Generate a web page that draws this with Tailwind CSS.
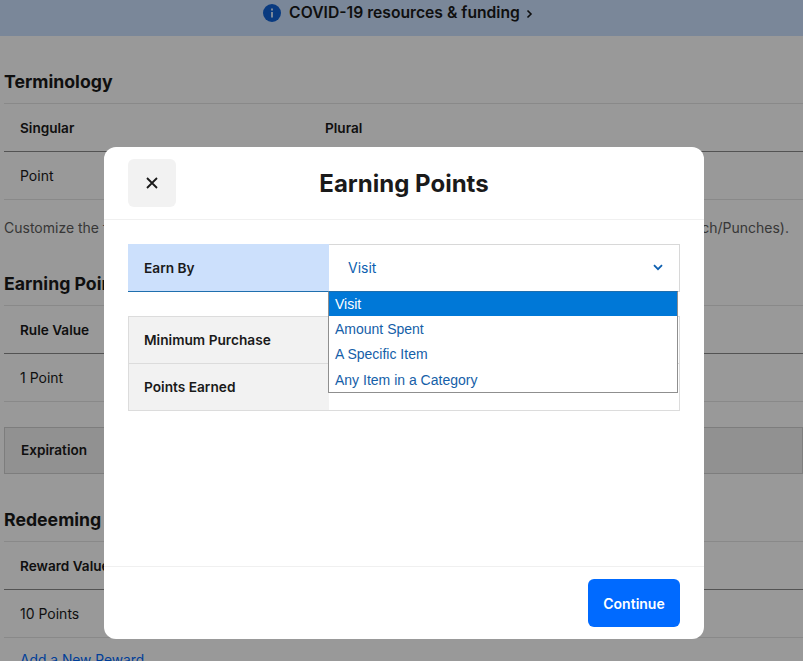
<!doctype html>
<html lang="en">
  <head>
    <meta charset="UTF-8" />
    <meta name="viewport" content="width=device-width, initial-scale=1.0" />
    <title>Earning Points</title>
    <script src="https://cdn.jsdelivr.net/npm/@tailwindcss/browser@4"></script>
  </head>
  <body class="bg-white h-screen overflow-hidden relative font-['Inter',sans-serif] text-[#1a1a1a]">
    <!-- Banner -->
    <div class="h-[36px] bg-[#cce1ff] flex items-center justify-center gap-2 pb-[10px] pr-[7px]">
      <svg class="w-[18px] h-[18px]" viewBox="0 0 18 18">
        <circle cx="9" cy="9" r="9" fill="#0f62d6" />
        <rect x="8" y="8" width="2" height="5.5" fill="#cce1ff" />
        <rect x="8" y="4.5" width="2" height="2" fill="#cce1ff" />
      </svg>
      <span class="text-[15.7px] font-semibold leading-5">COVID-19 resources &amp; funding</span>
      <svg class="w-[7px] h-[10px] -ml-[2px] mt-[2px]" viewBox="0 0 7 10" fill="none" stroke="#1a1a1a" stroke-width="1.6">
        <path d="M1.5 1.5 5 5 1.5 8.5" />
      </svg>
    </div>

    <!-- Page behind the modal -->
    <main class="pl-1">
      <h2 class="text-[17.7px] font-bold leading-6 mt-[34px] mb-[9px]">Terminology</h2>
      <div class="h-12 border-t border-[#e5e5e5] flex items-center text-[13.6px] font-semibold pl-4 pt-[2px]">
        <span class="w-[305px]">Singular</span>
        <span>Plural</span>
      </div>
      <div class="h-12 border-t border-[#8a8a8a] flex items-center text-[14px] pl-4">Point</div>
      <div class="border-t border-[#e5e5e5] pt-[18px] h-[37px]">
        <p class="w-[785px] flex justify-between text-[14px] leading-5 text-[#5c5c5c] whitespace-nowrap">
          <span>Customize the following terms for your program.</span>
          <span>Use a singular and a plural form (Punch/Punches).</span>
        </p>
      </div>

      <h2 class="text-[17.7px] font-bold leading-6 mt-[36px] mb-[9px]">Earning Points</h2>
      <div class="h-12 border-t border-[#e5e5e5] flex items-center text-[13.6px] font-semibold pl-4 pt-[2px]">Rule Value</div>
      <div class="h-12 border-t border-[#8a8a8a] flex items-center text-[14px] pl-4">1 Point</div>
      <div class="border-t border-[#e5e5e5] h-[26px]"></div>
      <div class="h-[47px] border border-[#d0d0d0] bg-[#f2f2f2] flex items-center text-[13.6px] font-semibold pl-4">Expiration</div>

      <h2 class="text-[17.7px] font-bold leading-6 mt-[34px] mb-[9px]">Redeeming Points</h2>
      <div class="h-12 border-t border-[#e5e5e5] flex items-center text-[13.6px] font-semibold pl-4 pt-[2px]">Reward Value</div>
      <div class="h-12 border-t border-[#8a8a8a] flex items-center text-[14px] pl-4">10 Points</div>
      <div class="border-t border-[#e5e5e5] pt-[12px] pl-4 text-[13.8px] leading-5 text-[#006aff]">Add a New Reward</div>
    </main>

    <!-- Modal -->
    <div class="absolute inset-0 bg-black/40 pt-[147px]">
      <div class="ml-[104px] w-[600px] h-[492px] bg-white rounded-xl flex flex-col">
        <header class="h-[73px] shrink-0 border-b border-[#f0f0f0] flex items-center px-6 relative">
          <button class="w-12 h-12 rounded-md bg-[#f2f2f2] flex items-center justify-center">
            <svg class="w-3 h-3" viewBox="0 0 12 12" fill="none" stroke="#1a1a1a" stroke-width="1.8">
              <path d="M1 1l10 10M11 1 1 11" />
            </svg>
          </button>
          <h1 class="flex-1 text-center text-[24px] font-bold leading-8 pr-[48px] pt-[2px]">Earning Points</h1>
        </header>

        <div class="flex-1 px-6 pt-6 relative">
          <!-- Earn By select -->
          <div class="flex h-12 w-[552px]">
            <div class="w-[201px] bg-[#cce0fc] border-b border-[#1f6fae] flex items-center pl-4 pt-[1px] text-[13.7px] font-semibold">Earn By</div>
            <div class="flex-1 border border-[#d8d8d8] border-l-0 flex items-center justify-between pl-[19px] pr-4 pb-[1px] text-[14px] text-[#0d5fb0]">
              <span>Visit</span>
              <svg class="w-[10px] h-[7px]" viewBox="0 0 10 7" fill="none" stroke="#0d5fb0" stroke-width="1.8">
                <path d="M1 1.2 5 5.2 9 1.2" />
              </svg>
            </div>
          </div>

          <!-- Rule fields -->
          <div class="mt-6 w-[552px] border border-[#dcdcdc]">
            <div class="h-[47px] border-b border-[#dcdcdc] flex">
              <div class="w-[200px] bg-[#f2f2f2] flex items-center pl-[15px] text-[13.7px] font-semibold">Minimum Purchase</div>
            </div>
            <div class="h-[46px] flex">
              <div class="w-[200px] bg-[#f2f2f2] flex items-center pl-[15px] text-[13.7px] font-semibold">Points Earned</div>
            </div>
          </div>

          <!-- Open dropdown list -->
          <ul class="absolute left-[224px] top-[71px] w-[350px] h-[102px] bg-white border border-[#8f8f8f] border-t-[#1f6fae] font-['Liberation_Sans',sans-serif] text-[14px] text-[#1560a8]">
            <li class="h-6 flex items-center pl-[6px] bg-[#0078d7] text-white">Visit</li>
            <li class="h-[25px] flex items-center pl-[6px] pt-[2px]">Amount Spent</li>
            <li class="h-[25px] flex items-center pl-[6px] pt-[2px]">A Specific Item</li>
            <li class="h-[26px] flex items-center pl-[6px] pt-[2px]">Any Item in a Category</li>
          </ul>
        </div>

        <footer class="h-[73px] shrink-0 border-t border-[#f0f0f0] flex items-center justify-end px-6">
          <button class="w-[92px] h-12 rounded-md bg-[#006aff] text-white text-[14px] font-semibold">Continue</button>
        </footer>
      </div>
    </div>
  </body>
</html>
